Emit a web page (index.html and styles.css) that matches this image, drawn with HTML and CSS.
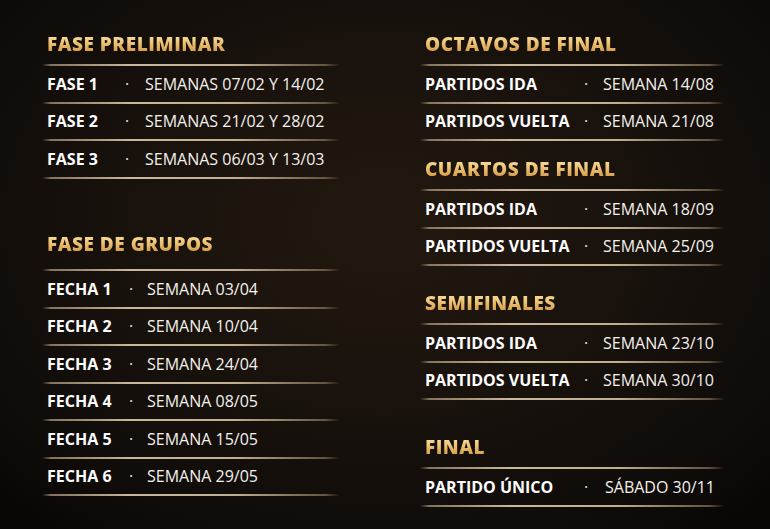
FILE: index.html
```html
<!DOCTYPE html>
<html lang="es">
<head>
<meta charset="utf-8">
<title>Calendario</title>
<link rel="stylesheet" href="styles.css">
</head>
<body>
<main class="page">
  <div class="col col-left">
    <section class="sec sec-pre">
      <h2 class="head"><span class="head-text">FASE PRELIMINAR</span></h2>
      <div class="row"><span class="lbl">FASE 1</span><span class="dot">·</span><span class="val">SEMANAS 07/02 Y 14/02</span></div>
      <div class="row"><span class="lbl">FASE 2</span><span class="dot">·</span><span class="val">SEMANAS 21/02 Y 28/02</span></div>
      <div class="row"><span class="lbl">FASE 3</span><span class="dot">·</span><span class="val">SEMANAS 06/03 Y 13/03</span></div>
    </section>
    <section class="sec sec-grupos">
      <h2 class="head head-tall"><span class="head-text">FASE DE GRUPOS</span></h2>
      <div class="row"><span class="lbl">FECHA 1</span><span class="dot">·</span><span class="val">SEMANA 03/04</span></div>
      <div class="row"><span class="lbl">FECHA 2</span><span class="dot">·</span><span class="val">SEMANA 10/04</span></div>
      <div class="row"><span class="lbl">FECHA 3</span><span class="dot">·</span><span class="val">SEMANA 24/04</span></div>
      <div class="row"><span class="lbl">FECHA 4</span><span class="dot">·</span><span class="val">SEMANA 08/05</span></div>
      <div class="row"><span class="lbl">FECHA 5</span><span class="dot">·</span><span class="val">SEMANA 15/05</span></div>
      <div class="row"><span class="lbl">FECHA 6</span><span class="dot">·</span><span class="val">SEMANA 29/05</span></div>
    </section>
  </div>
  <div class="col col-right">
    <section class="sec sec-ko">
      <h2 class="head"><span class="head-text">OCTAVOS DE FINAL</span></h2>
      <div class="row"><span class="lbl">PARTIDOS IDA</span><span class="dot">·</span><span class="val">SEMANA 14/08</span></div>
      <div class="row"><span class="lbl">PARTIDOS VUELTA</span><span class="dot">·</span><span class="val">SEMANA 21/08</span></div>
    </section>
    <section class="sec sec-ko sec-cuartos">
      <h2 class="head"><span class="head-text">CUARTOS DE FINAL</span></h2>
      <div class="row"><span class="lbl">PARTIDOS IDA</span><span class="dot">·</span><span class="val">SEMANA 18/09</span></div>
      <div class="row"><span class="lbl">PARTIDOS VUELTA</span><span class="dot">·</span><span class="val">SEMANA 25/09</span></div>
    </section>
    <section class="sec sec-ko sec-semi">
      <h2 class="head"><span class="head-text">SEMIFINALES</span></h2>
      <div class="row"><span class="lbl">PARTIDOS IDA</span><span class="dot">·</span><span class="val">SEMANA 23/10</span></div>
      <div class="row"><span class="lbl">PARTIDOS VUELTA</span><span class="dot">·</span><span class="val">SEMANA 30/10</span></div>
    </section>
    <section class="sec sec-ko sec-final">
      <h2 class="head"><span class="head-text">FINAL</span></h2>
      <div class="row"><span class="lbl">PARTIDO ÚNICO</span><span class="dot">·</span><span class="val">SÁBADO 30/11</span></div>
    </section>
  </div>
</main>
</body>
</html>
```

FILE: styles.css
```css
* { box-sizing: border-box; }

html, body {
  margin: 0;
  padding: 0;
  width: 770px;
  height: 529px;
  overflow: hidden;
}

body {
  background: radial-gradient(ellipse 70% 75% at 50% 42%, #22180f 0%, #1a130d 40%, #110d0a 75%, #090706 100%);
  font-family: "Open Sans", "Noto Sans", sans-serif;
  color: #fff;
}

.page {
  display: grid;
  grid-template-columns: 298px 305px;
  column-gap: 80px;
  padding: 33px 0 0 42px;
}

.col {
  display: flex;
  flex-direction: column;
}

.sec {
  display: flex;
  flex-direction: column;
  --label: 75px;
  --vgap: 13px;
}

.sec-grupos { margin-top: 54.5px; --label: 79px; --vgap: 11px; }
.sec-ko { --label: 156px; --vgap: 12px; }
.sec-cuartos { margin-top: 17px; }
.sec-semi { margin-top: 26px; }
.sec-final { margin-top: 36px; --vgap: 14px; }

.head {
  position: relative;
  margin: 0;
  padding: 0 0 11px 5px;
  font-size: 19px;
  line-height: 22px;
  font-weight: 800;
  letter-spacing: 0.5px;
  color: #e7b866;
}

.head-tall { padding-bottom: 16px; }

.row {
  position: relative;
}

.head::after,
.row::after {
  content: "";
  position: absolute;
  left: 0;
  right: 0;
  bottom: 0;
  height: 2px;
  background: linear-gradient(90deg, rgba(160,140,110,0) 0%, rgba(170,150,120,0.75) 3%, #c9b89b 30%, #bfae90 65%, rgba(150,130,100,0.6) 95%, rgba(150,130,100,0) 100%);
}

.head-text {
  background: linear-gradient(180deg, #fde9b2 0%, #f1c97c 40%, #d9a24f 75%, #b88136 100%);
  -webkit-background-clip: text;
  background-clip: text;
  color: transparent;
}

.row {
  display: flex;
  align-items: center;
  height: 37.5px;
  padding: 0 0 2px 5px;
  font-size: 16px;
  line-height: 20px;
}

.lbl {
  width: var(--label);
  flex: none;
  font-weight: 700;
  color: #fdfdfd;
}

.dot {
  width: 10px;
  flex: none;
  text-align: center;
  font-weight: 400;
  color: #e8e4de;
}

.val {
  margin-left: var(--vgap);
  font-weight: 400;
  color: #f4f1ec;
  white-space: nowrap;
}
```
